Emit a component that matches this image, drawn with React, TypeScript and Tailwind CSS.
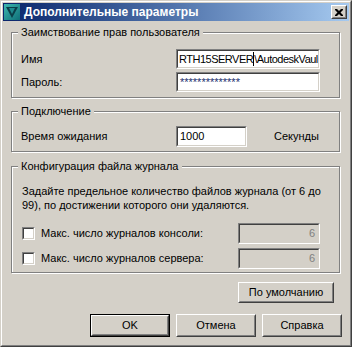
const font = { fontFamily: '"Liberation Sans", Arial, sans-serif' };

function Sunken({ className = "", inner = "bg-white", children }: { className?: string; inner?: string; children?: React.ReactNode }) {
  return (
    <div className={`border border-t-[#808080] border-l-[#808080] border-b-white border-r-white ${className}`}>
      <div className={`h-full w-full border border-t-[#404040] border-l-[#404040] border-b-[#d4d0c8] border-r-[#d4d0c8] overflow-hidden ${inner}`}>
        {children}
      </div>
    </div>
  );
}

function Button({ label, className = "", isDefault = false }: { label: string; className?: string; isDefault?: boolean }) {
  const body = (
    <div className="h-full w-full border border-t-white border-l-white border-b-[#404040] border-r-[#404040]">
      <div className="flex h-full w-full items-center justify-center border border-t-[#d4d0c8] border-l-[#d4d0c8] border-b-[#808080] border-r-[#808080] text-[11px] text-black">
        {label}
      </div>
    </div>
  );
  if (isDefault) return <div className={`border border-black ${className}`}>{body}</div>;
  return <div className={className}>{body}</div>;
}

function Group({ title, className = "", children }: { title: string; className?: string; children: React.ReactNode }) {
  return (
    <div className={`relative mr-[2px] border border-[#808080] shadow-[inset_1px_1px_0_#fff,1px_1px_0_#fff] ${className}`}>
      <span className="absolute left-[6px] top-[-8px] bg-[#d4d0c8] px-[3px] text-[11px] leading-[14px] text-black">{title}</span>
      {children}
    </div>
  );
}

function Checkbox() {
  return <Sunken className="h-[13px] w-[13px] shrink-0" />;
}

function VaultIcon() {
  return (
    <svg width="16" height="16" viewBox="0 0 16 16">
      <defs>
        <linearGradient id="vg" x1="0" y1="0" x2="1" y2="1">
          <stop offset="0" stopColor="#3fb8b0" />
          <stop offset="1" stopColor="#0f6f78" />
        </linearGradient>
      </defs>
      <rect width="16" height="16" fill="url(#vg)" />
      <path d="M2 3 L14 3 L8 14 Z" fill="#0b3f4a" />
      <path d="M5 4 L11 4 L8 10 Z" fill="#1f8a8e" />
    </svg>
  );
}

export default function App() {
  return (
    <div style={font} className="h-[347px] w-[352px] border border-t-[#d4d0c8] border-l-[#d4d0c8] border-b-[#404040] border-r-[#404040] bg-[#d4d0c8]">
      <div className="flex h-full w-full flex-col border border-t-white border-l-white border-b-[#808080] border-r-[#808080] p-px">
        <div className="flex h-[18px] shrink-0 items-center bg-gradient-to-r from-[#0a246a] to-[#a6caf0] pl-px pr-[2px]">
          <VaultIcon />
          <span className="ml-[4px] text-[12px] font-bold text-white">Дополнительные параметры</span>
          <div className="ml-auto h-[14px] w-[16px]">
            <div className="h-full w-full border border-t-white border-l-white border-b-[#404040] border-r-[#404040] bg-[#d4d0c8]">
              <div className="flex h-full w-full items-center justify-center border border-t-[#d4d0c8] border-l-[#d4d0c8] border-b-[#808080] border-r-[#808080]">
                <svg width="8" height="7" viewBox="0 0 8 7">
                  <path d="M0 0h2l2 2 2-2h2v1L5.5 3.5 8 6v1H6L4 5 2 7H0V6l2.5-2.5L0 1z" fill="#000" />
                </svg>
              </div>
            </div>
          </div>
        </div>

        <div className="flex flex-1 flex-col pl-[8px] pr-[7px] pt-[11px] text-[11px] text-black">
          <Group title="Заимствование прав пользователя" className="h-[66px] shrink-0 pl-[9px] pr-[19px] pt-[16px]">
            <div className="flex h-[20px] items-center">
              <span>Имя</span>
              <Sunken className="ml-auto h-[20px] w-[144px]">
                <div className="flex h-full items-center whitespace-nowrap pl-[1px] text-[11px] tracking-[-0.5px]">
                  RTH15SERVER<span className="h-[14px] border-l border-black" />\AutodeskVaul
                </div>
              </Sunken>
            </div>
            <div className="mt-[3px] flex h-[20px] items-center">
              <span>Пароль:</span>
              <Sunken className="ml-auto h-[20px] w-[144px]">
                <div className="flex h-full items-center pl-[2px] text-[11px] text-[#1c2f6e]">**************</div>
              </Sunken>
            </div>
          </Group>

          <Group title="Подключение" className="mt-[13px] h-[41px] shrink-0 pl-[9px] pt-[14px]">
            <div className="flex h-[21px] items-center">
              <span className="w-[155px]">Время ожидания</span>
              <Sunken className="h-[21px] w-[71px]">
                <div className="flex h-full items-center pl-[2px]">1000</div>
              </Sunken>
              <span className="ml-[27px]">Секунды</span>
            </div>
          </Group>

          <Group title="Конфигурация файла журнала" className="mt-[14px] h-[107px] shrink-0 pl-[10px] pr-[19px] pt-[17px]">
            <p className="w-[312px] leading-[14px]">Задайте предельное количество файлов журнала (от 6 до 99), по достижении которого они удаляются.</p>
            <div className="mt-[11px] flex h-[21px] items-center">
              <Checkbox />
              <span className="ml-[6px]">Макс. число журналов консоли:</span>
              <Sunken className="ml-auto h-[21px] w-[82px]" inner="bg-[#d4d0c8]">
                <div className="flex h-full items-center justify-end pr-[3px] text-[#808080]">6</div>
              </Sunken>
            </div>
            <div className="mt-[4px] flex h-[21px] items-center">
              <Checkbox />
              <span className="ml-[6px]">Макс. число журналов сервера:</span>
              <Sunken className="ml-auto h-[21px] w-[82px]" inner="bg-[#d4d0c8]">
                <div className="flex h-full items-center justify-end pr-[3px] text-[#808080]">6</div>
              </Sunken>
            </div>
          </Group>

          <div className="mt-[9px] flex justify-end pr-[8px]">
            <Button label="По умолчанию" className="h-[21px] w-[96px]" />
          </div>

          <div className="mt-[11px] flex justify-end gap-[6px]">
            <Button label="OK" className="h-[23px] w-[80px]" isDefault />
            <Button label="Отмена" className="h-[23px] w-[80px]" />
            <Button label="Справка" className="h-[23px] w-[80px]" />
          </div>
        </div>
      </div>
    </div>
  );
}
